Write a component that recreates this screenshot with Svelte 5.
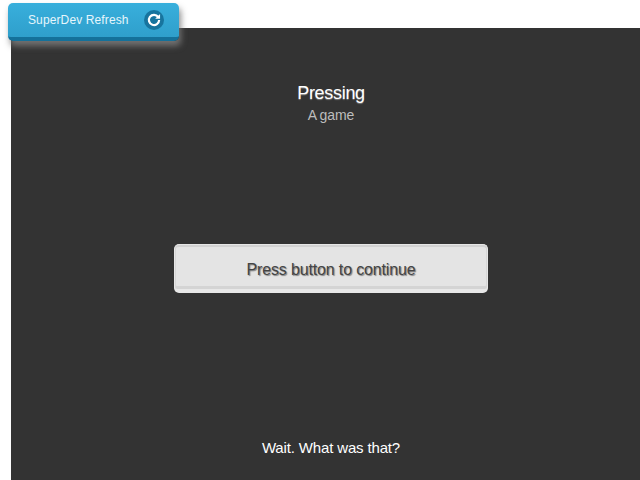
<script lang="ts">
	const title = 'Pressing'
	const subtitle = 'A game'
	const label = 'Press button to continue'
	const footer = 'Wait. What was that?'
</script>

<div class="page">
	<button class="refresh">
		<span>SuperDev Refresh</span>
		<span class="icon">
			<svg width="14" height="14" viewBox="0 0 12 12">
				<path d="M9.6 3.4A4.4 4.4 0 1 0 10.4 6" fill="none" stroke="#fff" stroke-width="1.9" />
				<path d="M11.2 0.8V5H7z" fill="#fff" />
			</svg>
		</span>
	</button>
	<main class="stage">
		<header>
			<h1>{title}</h1>
			<p>{subtitle}</p>
		</header>
		<div class="action">
			<button class="continue"><span>{label}</span></button>
		</div>
		<footer>{footer}</footer>
	</main>
</div>

<style>
	:global(body) {
		margin: 0;
		background: #fff;
	}
	.page {
		position: relative;
		width: 640px;
		height: 480px;
		overflow: hidden;
		padding: 28px 0 0 11px;
		box-sizing: border-box;
		font-family: 'Liberation Sans', Arial, sans-serif;
	}
	.refresh {
		position: absolute;
		left: 8px;
		top: 3px;
		width: 171px;
		height: 38px;
		padding: 0 15px 0 20px;
		box-sizing: border-box;
		display: flex;
		align-items: center;
		justify-content: space-between;
		border: none;
		border-bottom: 4px solid #14719a;
		border-radius: 5px;
		background: linear-gradient(#38afdc, #2f9fcb);
		box-shadow: 2px 5px 6px rgba(125, 125, 125, 0.85);
		color: #e6f6fc;
		font: 12px 'Liberation Sans', Arial, sans-serif;
		letter-spacing: 0.12px;
	}
	.icon {
		width: 20px;
		height: 20px;
		display: flex;
		align-items: center;
		justify-content: center;
		border-radius: 50%;
		background: #17749e;
	}
	.stage {
		width: 640px;
		flex: none;
		height: 452px;
		display: flex;
		flex-direction: column;
		align-items: center;
		background: #333;
		color: #fff;
	}
	header {
		padding-top: 55px;
		text-align: center;
	}
	h1 {
		margin: 0;
		font-size: 18px;
		font-weight: 400;
		line-height: 21px;
		letter-spacing: -0.3px;
		text-shadow: 0 1px 1px rgba(255, 255, 255, 0.35);
	}
	p {
		margin: 3px 0 0;
		font-size: 14px;
		line-height: 16px;
		letter-spacing: -0.1px;
		word-spacing: -0.5px;
		color: #bdbdbd;
	}
	.action {
		flex: 1;
		padding-top: 121px;
	}
	.continue {
		display: block;
		width: 314px;
		height: 49px;
		padding: 6px 0 0;
		box-sizing: border-box;
		border: 1px solid #e6e6e6;
		border-bottom: 4px solid #e8e8e8;
		border-radius: 5px;
		background: #e4e4e4;
		box-shadow: inset 0 2px 0 #d2d2d2, inset 1px 0 0 #d6d6d6, inset -1px 0 0 #d6d6d6, inset 0 -3px 0 #d4d4d4;
		color: #444;
		font: 16px 'Liberation Sans', Arial, sans-serif;
		letter-spacing: -0.15px;
		text-shadow: 1px 1px 1px #808080;
	}
	footer {
		padding-bottom: 23px;
		font-size: 15px;
		line-height: 18px;
		letter-spacing: -0.15px;
		color: #fff;
	}
</style>
